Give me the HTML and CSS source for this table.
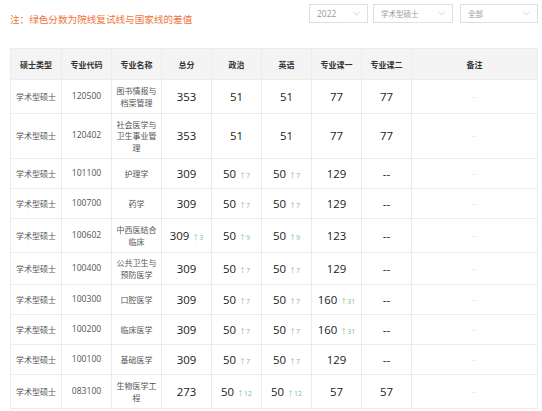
FILE: index.html
```html
<!DOCTYPE html>
<html lang="zh-CN">
<head>
<meta charset="utf-8">
<title>分数线</title>
<link rel="stylesheet" href="styles.css">
</head>
<body>
<div class="page">
  <div class="topbar">
    <p class="note">注：绿色分数为院线复试线与国家线的差值</p>
    <div class="filters">
      <div class="select s-year"><span>2022</span><svg class="chev" viewBox="0 0 7 5" width="7" height="5"><polyline points="0.5,0.6 3.5,4.2 6.5,0.6"/></svg></div>
      <div class="select s-type"><span>学术型硕士</span><svg class="chev" viewBox="0 0 7 5" width="7" height="5"><polyline points="0.5,0.6 3.5,4.2 6.5,0.6"/></svg></div>
      <div class="select s-all"><span>全部</span><svg class="chev" viewBox="0 0 7 5" width="7" height="5"><polyline points="0.5,0.6 3.5,4.2 6.5,0.6"/></svg></div>
    </div>
  </div>
  <table class="scores">
    <colgroup>
      <col class="c-type"><col class="c-std"><col class="c-std"><col class="c-std"><col class="c-std"><col class="c-std"><col class="c-std"><col class="c-std"><col class="c-note">
    </colgroup>
    <thead>
      <tr><th>硕士类型</th><th>专业代码</th><th>专业名称</th><th>总分</th><th>政治</th><th>英语</th><th>专业课一</th><th>专业课二</th><th>备注</th></tr>
    </thead>
    <tbody>
      <tr class="r2"><td class="t">学术型硕士</td><td class="code">120500</td><td class="t">图书情报与档案管理</td><td class="n">353</td><td class="n">51</td><td class="n">51</td><td class="n">77</td><td class="n">77</td><td class="rm">--</td></tr>
      <tr class="r3"><td class="t">学术型硕士</td><td class="code">120402</td><td class="t">社会医学与卫生事业管理</td><td class="n">353</td><td class="n">51</td><td class="n">51</td><td class="n">77</td><td class="n">77</td><td class="rm">--</td></tr>
      <tr class="r1"><td class="t">学术型硕士</td><td class="code">101100</td><td class="t">护理学</td><td class="n">309</td><td class="n">50 <span class="up">↑7</span></td><td class="n">50 <span class="up">↑7</span></td><td class="n">129</td><td class="n">--</td><td class="rm">--</td></tr>
      <tr class="r1"><td class="t">学术型硕士</td><td class="code">100700</td><td class="t">药学</td><td class="n">309</td><td class="n">50 <span class="up">↑7</span></td><td class="n">50 <span class="up">↑7</span></td><td class="n">129</td><td class="n">--</td><td class="rm">--</td></tr>
      <tr class="r2"><td class="t">学术型硕士</td><td class="code">100602</td><td class="t">中西医结合临床</td><td class="n">309 <span class="up">↑3</span></td><td class="n">50 <span class="up">↑9</span></td><td class="n">50 <span class="up">↑9</span></td><td class="n">123</td><td class="n">--</td><td class="rm">--</td></tr>
      <tr class="r2b"><td class="t">学术型硕士</td><td class="code">100400</td><td class="t">公共卫生与预防医学</td><td class="n">309</td><td class="n">50 <span class="up">↑7</span></td><td class="n">50 <span class="up">↑7</span></td><td class="n">129</td><td class="n">--</td><td class="rm">--</td></tr>
      <tr class="r1"><td class="t">学术型硕士</td><td class="code">100300</td><td class="t">口腔医学</td><td class="n">309</td><td class="n">50 <span class="up">↑7</span></td><td class="n">50 <span class="up">↑7</span></td><td class="n">160 <span class="up">↑31</span></td><td class="n">--</td><td class="rm">--</td></tr>
      <tr class="r1"><td class="t">学术型硕士</td><td class="code">100200</td><td class="t">临床医学</td><td class="n">309</td><td class="n">50 <span class="up">↑7</span></td><td class="n">50 <span class="up">↑7</span></td><td class="n">160 <span class="up">↑31</span></td><td class="n">--</td><td class="rm">--</td></tr>
      <tr class="r1"><td class="t">学术型硕士</td><td class="code">100100</td><td class="t">基础医学</td><td class="n">309</td><td class="n">50 <span class="up">↑7</span></td><td class="n">50 <span class="up">↑7</span></td><td class="n">129</td><td class="n">--</td><td class="rm">--</td></tr>
      <tr class="r2"><td class="t">学术型硕士</td><td class="code">083100</td><td class="t">生物医学工程</td><td class="n">273</td><td class="n">50 <span class="up">↑12</span></td><td class="n">50 <span class="up">↑12</span></td><td class="n">57</td><td class="n">57</td><td class="rm">--</td></tr>
    </tbody>
  </table>
</div>
</body>
</html>
```

FILE: styles.css
```css
* { box-sizing: border-box; }
html, body { margin: 0; padding: 0; background: #fff; }
body {
  font-family: "Open Sans", "Noto Sans CJK SC", sans-serif;
  color: #333;
}
.page {
  padding: 4px 4px 0 10px;
}
.topbar {
  display: flex;
  justify-content: space-between;
  align-items: flex-start;
  height: 44px;
}
.note {
  margin: 9px 0 0 0;
  font-size: 9.6px;
  line-height: 13px;
  color: #f0743a;
  font-family: "Noto Sans CJK SC", sans-serif;
}
.filters {
  display: flex;
  gap: 5px;
}
.select {
  height: 19px;
  border: 1px solid #dcdfe6;
  display: flex;
  align-items: center;
  justify-content: space-between;
  padding: 0 7px 0 7px;
  font-size: 7.5px;
  color: #999;
  background: #fff;
  font-family: "Open Sans", "Noto Sans CJK SC", sans-serif;
}
.s-year { width: 59px; font-size: 8.5px; }
.s-type { width: 80px; }
.s-all { width: 78px; margin-left: 2px; }
.chev polyline {
  fill: none;
  stroke: #c8ccd2;
  stroke-width: 0.8;
}
.scores {
  width: 527px;
  table-layout: fixed;
  border-collapse: collapse;
  border: 1px solid #ebebeb;
}
.c-type { width: 51px; }
.c-std { width: 50px; }
.c-note { width: 126px; }
.scores thead tr { height: 31px; }
.scores th {
  height: 31px;
  background: #f4f4f4;
  font-size: 8px;
  font-weight: 700;
  color: #333;
  text-align: center;
  padding: 0 2px;
  border: 1px solid #ececec;
  font-family: "Noto Sans CJK SC", sans-serif;
}
.r1 { height: 30px; }
.r2 { height: 34px; }
.r2b { height: 32px; }
.r3 { height: 45px; }
.scores td {
  border: 1px solid #ececec;
  text-align: center;
  padding: 0 4px;
  vertical-align: middle;
}
.t {
  font-size: 8px;
  line-height: 11.5px;
  color: #555;
  font-family: "Noto Sans CJK SC", sans-serif;
}
.code {
  font-size: 8.6px;
  line-height: 11.5px;
  color: #555;
}
.n {
  font-size: 11.4px;
  line-height: 16px;
  color: #1a1a1a;
  white-space: nowrap;
}
.up {
  font-size: 7px;
  line-height: 0;
  color: #86b9a4;
}
.rm {
  font-size: 6px;
  line-height: 10px;
  color: #c0c0c0;
}
```
